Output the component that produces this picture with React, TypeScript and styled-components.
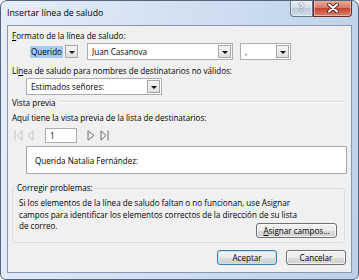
import React from 'react';
import styled, { createGlobalStyle } from 'styled-components';

const GlobalStyle = createGlobalStyle`
  html, body {
    margin: 0;
    padding: 0;
    background: #ffffff;
  }
  body {
    font-family: "Open Sans", "Noto Sans", sans-serif;
    font-size: 8.1px;
    color: #000;
  }
`;

const Window = styled.div`
  box-sizing: border-box;
  width: 359px;
  height: 280px;
  border: 1px solid #52657c;
  border-radius: 7px 7px 6px 6px;
  background: linear-gradient(100deg, #e6eef8 0%, #d2e0f1 45%, #bdd0e8 100%);
  padding: 0 6px 6px 6px;
  display: flex;
  flex-direction: column;
  overflow: hidden;
`;

const TitleBar = styled.div`
  height: 24px;
  display: flex;
  justify-content: space-between;
  align-items: flex-start;
  flex-shrink: 0;
`;

const Title = styled.div`
  margin-top: 6px;
  height: 12px;
  line-height: 12px;
  font-size: 8.8px;
  color: #000;
`;

const CaptionButtons = styled.div`
  display: flex;
  margin-top: -1px;
`;

const CaptionButton = styled.div<{ $close?: boolean }>`
  box-sizing: border-box;
  width: ${p => (p.$close ? 39 : 23)}px;
  height: 17px;
  display: flex;
  align-items: center;
  justify-content: center;
  border: 1px solid ${p => (p.$close ? '#6b2a20' : '#66778e')};
  border-top: none;
  border-radius: ${p => (p.$close ? '0 0 4px 0' : '0 0 0 4px')};
  background: ${p =>
    p.$close
      ? 'linear-gradient(#eab0a3 0%, #d9796a 48%, #c4452f 52%, #d9806c 100%)'
      : 'linear-gradient(#eef2f7 0%, #d3dde9 48%, #bccbdc 52%, #d0dcea 100%)'};
  box-shadow: inset 0 0 0 1px rgba(255, 255, 255, 0.45);
`;

const HelpGlyph = styled.span`
  font-family: "DejaVu Sans", sans-serif;
  font-weight: bold;
  font-size: 10px;
  line-height: 10px;
  color: #ffffff;
  text-shadow: 0 0 1px #3b4c60, 0 0 1px #3b4c60;
`;

const Client = styled.div`
  flex: 1;
  background: #f0f0f0;
  border: 1px solid #8799b0;
  padding: 4px 4px 0 4px;
  display: flex;
  flex-direction: column;
`;

const Label = styled.div<{ $gap?: number }>`
  margin-top: ${p => p.$gap ?? 0}px;
  height: 12px;
  line-height: 12px;
  white-space: nowrap;
`;

const ComboRow = styled.div<{ $gap?: number }>`
  display: flex;
  gap: 7px;
  margin-top: ${p => p.$gap ?? 0}px;
  margin-left: 14px;
  height: 17px;
`;

const Combo = styled.div<{ $width: number; $plain?: boolean }>`
  box-sizing: border-box;
  width: ${p => p.$width}px;
  height: 17px;
  display: flex;
  align-items: center;
  padding-left: ${p => (p.$plain ? 3 : 4)}px;
  border: 1px solid ${p => (p.$plain ? 'transparent' : '#abadb3')};
  background: ${p => (p.$plain ? 'transparent' : '#ffffff')};
`;

const ComboText = styled.span`
  flex: 1;
  white-space: nowrap;
  overflow: hidden;
  line-height: 12px;
`;

const Selected = styled.span`
  background: #a4cbf0;
  padding: 1px 1px;
`;

const DropButton = styled.div`
  box-sizing: border-box;
  width: 13px;
  height: 13px;
  margin-right: 1px;
  flex-shrink: 0;
  display: flex;
  align-items: center;
  justify-content: center;
  border: 1px solid #a7a7a7;
  background: linear-gradient(#f6f6f6, #dedede);

  &::after {
    content: '';
    border-left: 3px solid transparent;
    border-right: 3px solid transparent;
    border-top: 3px solid #111;
    margin-top: 1px;
  }
`;

const SeparatorRow = styled.div<{ $gap?: number }>`
  display: flex;
  align-items: center;
  margin-top: ${p => p.$gap ?? 0}px;
  margin-right: 2px;
  height: 12px;
  line-height: 12px;
`;

const Etch = styled.div`
  flex: 1;
  margin-left: 4px;
  margin-top: -3px;
  border-top: 1px solid #d5dfe5;
  border-bottom: 1px solid #ffffff;
`;

const NavRow = styled.div`
  display: flex;
  align-items: center;
  margin-top: 4px;
  height: 15px;
  padding-left: 2px;
`;

const NavIcon = styled.svg<{ $gap?: number }>`
  width: 9px;
  height: 11px;
  margin-left: ${p => p.$gap ?? 0}px;
  flex-shrink: 0;
`;

const RecordInput = styled.div`
  box-sizing: border-box;
  width: 32px;
  height: 15px;
  margin-left: 10px;
  padding-left: 4px;
  border: 1px solid #abadb3;
  background: #ffffff;
  line-height: 13px;
`;

const PreviewBox = styled.div`
  box-sizing: border-box;
  margin-top: 3px;
  margin-left: 14px;
  height: 28px;
  padding-left: 8px;
  display: flex;
  align-items: center;
  border: 1px solid #a5a7ab;
  background: #ffffff;
`;

const Group = styled.fieldset`
  margin: 8px 2px 0 0;
  padding: 0 7px 4px 6px;
  border: 1px solid #d5dfe5;
  border-radius: 3px;
  min-inline-size: 0;
`;

const GroupLegend = styled.legend`
  margin-left: -4px;
  padding: 0 2px;
  height: 12px;
  line-height: 12px;
`;

const GroupBody = styled.div`
  display: grid;
  min-height: 44px;
`;

const Paragraph = styled.p`
  grid-area: 1 / 1;
  margin: 3px 0 0 0;
  line-height: 11.5px;
`;

const Button = styled.button<{ $width: number; $default?: boolean }>`
  box-sizing: border-box;
  width: ${p => p.$width}px;
  height: 15px;
  padding: 0;
  font-family: inherit;
  font-size: inherit;
  line-height: 12px;
  color: #000;
  border: 1px solid ${p => (p.$default ? '#3c7fb1' : '#707070')};
  border-radius: 3px;
  background: linear-gradient(#f2f2f2 0%, #ebebeb 50%, #dddddd 50%, #cfcfcf 100%);
  box-shadow: inset 0 0 0 1px ${p => (p.$default ? '#bfe3f5' : 'rgba(255,255,255,0.7)')};
`;

const AssignButton = styled(Button)`
  grid-area: 1 / 1;
  justify-self: end;
  align-self: end;
`;

const Footer = styled.div`
  display: flex;
  justify-content: flex-end;
  gap: 9px;
  margin-top: 7px;
  margin-right: 1px;
`;

const navColor = (enabled: boolean) => (enabled ? '#6f6f6f' : '#c4c4c4');

function FirstIcon({ enabled }: { enabled: boolean }) {
  const c = navColor(enabled);
  return (
    <NavIcon viewBox="0 0 9 11">
      <line x1="1" y1="0.5" x2="1" y2="10.5" stroke={c} />
      <polygon points="8,0.8 3,5.5 8,10.2" fill="none" stroke={c} />
    </NavIcon>
  );
}

function PrevIcon({ enabled }: { enabled: boolean }) {
  const c = navColor(enabled);
  return (
    <NavIcon viewBox="0 0 9 11" $gap={3}>
      <polygon points="7,0.8 2,5.5 7,10.2" fill="none" stroke={c} />
    </NavIcon>
  );
}

function NextIcon({ enabled }: { enabled: boolean }) {
  const c = navColor(enabled);
  return (
    <NavIcon viewBox="0 0 9 11" $gap={10}>
      <polygon points="1,0.8 7,5.5 1,10.2" fill="none" stroke={c} />
    </NavIcon>
  );
}

function LastIcon({ enabled }: { enabled: boolean }) {
  const c = navColor(enabled);
  return (
    <NavIcon viewBox="0 0 9 11" $gap={4}>
      <polygon points="1,0.8 6,5.5 1,10.2" fill="none" stroke={c} />
      <line x1="8" y1="0.5" x2="8" y2="10.5" stroke={c} />
    </NavIcon>
  );
}

function CloseGlyph() {
  return (
    <svg width="12" height="10" viewBox="0 0 12 10">
      <path d="M2 1.5 L10 8.5 M10 1.5 L2 8.5" stroke="#5a2a24" strokeWidth="4" strokeLinecap="round" />
      <path d="M2 1.5 L10 8.5 M10 1.5 L2 8.5" stroke="#ffffff" strokeWidth="2" strokeLinecap="round" />
    </svg>
  );
}

export default function App() {
  return (
    <>
      <GlobalStyle />
      <Window>
        <TitleBar>
          <Title>Insertar línea de saludo</Title>
          <CaptionButtons>
            <CaptionButton>
              <HelpGlyph>?</HelpGlyph>
            </CaptionButton>
            <CaptionButton $close>
              <CloseGlyph />
            </CaptionButton>
          </CaptionButtons>
        </TitleBar>

        <Client>
          <Label>
            <u>F</u>ormato de la línea de saludo:
          </Label>
          <ComboRow $gap={1}>
            <Combo $width={54} $plain>
              <ComboText>
                <Selected>Querido</Selected>
              </ComboText>
              <DropButton />
            </Combo>
            <Combo $width={146}>
              <ComboText>Juan Casanova</ComboText>
              <DropButton />
            </Combo>
            <Combo $width={51}>
              <ComboText>,</ComboText>
              <DropButton />
            </Combo>
          </ComboRow>

          <Label $gap={5}>
            Lí<u>n</u>ea de saludo para nombres de destinatarios no válidos:
          </Label>
          <ComboRow $gap={1}>
            <Combo $width={136}>
              <ComboText>Estimados señores:</ComboText>
              <DropButton />
            </Combo>
          </ComboRow>

          <SeparatorRow $gap={2}>
            <span>Vista previa</span>
            <Etch />
          </SeparatorRow>

          <Label $gap={3}>Aquí tiene la vista previa de la lista de destinatarios:</Label>
          <NavRow>
            <FirstIcon enabled={false} />
            <PrevIcon enabled={false} />
            <RecordInput>1</RecordInput>
            <NextIcon enabled />
            <LastIcon enabled />
          </NavRow>
          <PreviewBox>Querida Natalia Fernández:</PreviewBox>

          <Group>
            <GroupLegend>Corregir problemas:</GroupLegend>
            <GroupBody>
              <Paragraph>
                Si los elementos de la línea de saludo faltan o no funcionan, use Asignar
                <br />
                campos para identificar los elementos correctos de la dirección de su lista
                <br />
                de correo.
              </Paragraph>
              <AssignButton $width={81}>
                <u>A</u>signar campos...
              </AssignButton>
            </GroupBody>
          </Group>

          <Footer>
            <Button $width={60} $default>
              Aceptar
            </Button>
            <Button $width={60}>Cancelar</Button>
          </Footer>
        </Client>
      </Window>
    </>
  );
}
